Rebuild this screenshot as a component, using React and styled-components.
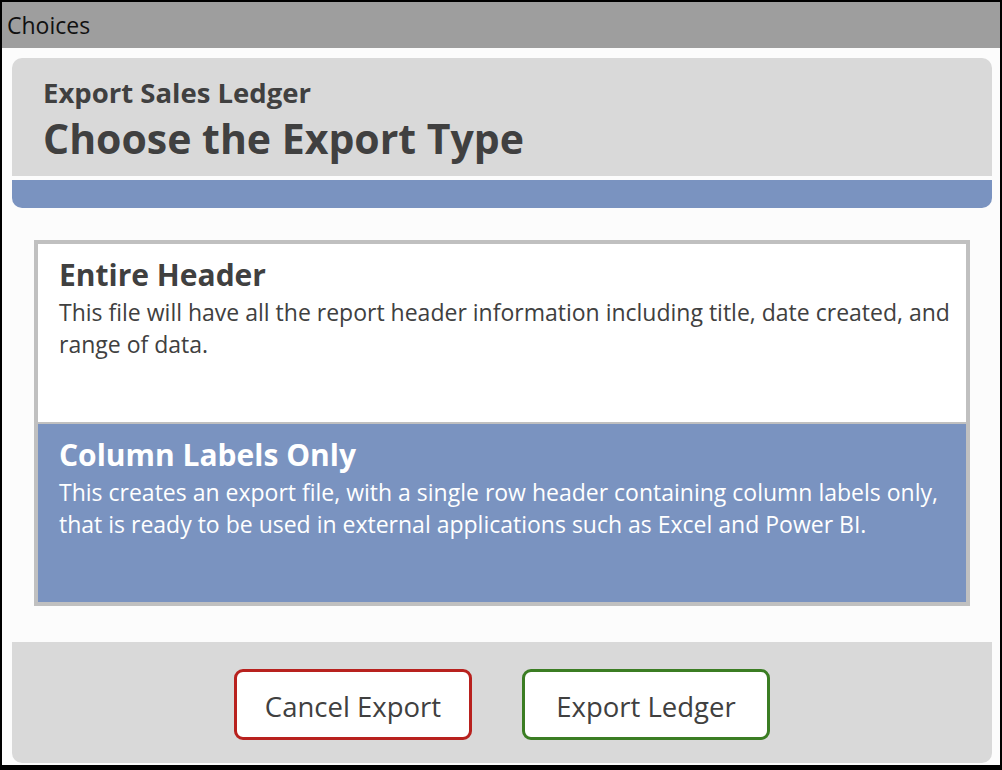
import React, { useState } from 'react';
import styled, { createGlobalStyle } from 'styled-components';

const GlobalStyle = createGlobalStyle`
  html, body {
    margin: 0;
    padding: 0;
    background: #000;
  }
  * {
    box-sizing: border-box;
  }
`;

const Frame = styled.div`
  width: 1002px;
  height: 770px;
  border-style: solid;
  border-color: #000;
  border-width: 2px 2px 5px 2px;
  background: #fcfcfc;
  display: flex;
  flex-direction: column;
  font-family: 'Segoe UI', 'Open Sans', sans-serif;
  color: #404040;
`;

const TitleBar = styled.div`
  height: 46px;
  background: #9e9e9e;
  color: #111;
  font-size: 23px;
  line-height: 46px;
  padding-left: 5px;
`;

const Body = styled.div`
  flex: 1;
  display: flex;
  flex-direction: column;
  padding: 10px 8px 2px 10px;
`;

const Header = styled.div`
  display: flex;
  flex-direction: column;
  gap: 4px;
`;

const HeaderTop = styled.div`
  height: 118px;
  background: #d9d9d9;
  border-radius: 10px 10px 0 0;
  padding: 18px 31px 0;
  overflow: hidden;
`;

const SubTitle = styled.div`
  font-size: 27.5px;
  font-weight: 700;
  line-height: 34px;
`;

const MainTitle = styled.h1`
  margin: 0;
  font-size: 41px;
  font-weight: 700;
  line-height: 56px;
`;

const HeaderBar = styled.div`
  height: 28px;
  background: #7a93c0;
  border-radius: 0 0 10px 10px;
`;

const OptionList = styled.div`
  margin: 32px 22px 0;
  border: 4px solid #c0c0c0;
  display: flex;
  flex-direction: column;
`;

const Option = styled.div`
  height: ${(p) => (p.first ? 178 : 180)}px;
  padding: 13px 10px 0 21px;
  background: ${(p) => (p.selected ? '#7a93c0' : '#fff')};
  color: ${(p) => (p.selected ? '#fff' : '#404040')};
  border-top: ${(p) => (p.first ? 'none' : '2px solid #c0c0c0')};
  cursor: pointer;
`;

const OptionTitle = styled.div`
  font-size: 30px;
  font-weight: 700;
  line-height: 36px;
`;

const OptionText = styled.div`
  margin-top: 3px;
  font-size: 23px;
  line-height: 32px;
`;

const Footer = styled.div`
  margin-top: auto;
  height: 121px;
  background: #d9d9d9;
  border-radius: 0 0 10px 10px;
  display: flex;
  justify-content: center;
  align-items: flex-start;
  gap: 50px;
  padding-top: 27px;
`;

const ActionButton = styled.button`
  height: 71px;
  width: ${(p) => p.w}px;
  background: #fff;
  border: 3px solid ${(p) => p.tone};
  border-radius: 9px;
  font-family: inherit;
  font-size: 27.5px;
  color: #404040;
  padding: 4px 0 0;
  cursor: pointer;
`;

const options = [
  {
    id: 'entire',
    title: 'Entire Header',
    text: 'This file will have all the report header information including title, date created, and range of data.',
  },
  {
    id: 'labels',
    title: 'Column Labels Only',
    text: 'This creates an export file, with a single row header containing column labels only, that is ready to be used in external applications such as Excel and Power BI.',
  },
];

const App = () => {
  const [selected, setSelected] = useState('labels');

  return (
    <>
      <GlobalStyle />
      <Frame>
        <TitleBar>Choices</TitleBar>
        <Body>
          <Header>
            <HeaderTop>
              <SubTitle>Export Sales Ledger</SubTitle>
              <MainTitle>Choose the Export Type</MainTitle>
            </HeaderTop>
            <HeaderBar />
          </Header>
          <OptionList>
            {options.map((o, i) => (
              <Option
                key={o.id}
                first={i === 0}
                selected={selected === o.id}
                onClick={() => setSelected(o.id)}
              >
                <OptionTitle>{o.title}</OptionTitle>
                <OptionText>{o.text}</OptionText>
              </Option>
            ))}
          </OptionList>
          <Footer>
            <ActionButton tone="#b8211e" w={238}>Cancel Export</ActionButton>
            <ActionButton tone="#3b7d23" w={248}>Export Ledger</ActionButton>
          </Footer>
        </Body>
      </Frame>
    </>
  );
};

export default App;
